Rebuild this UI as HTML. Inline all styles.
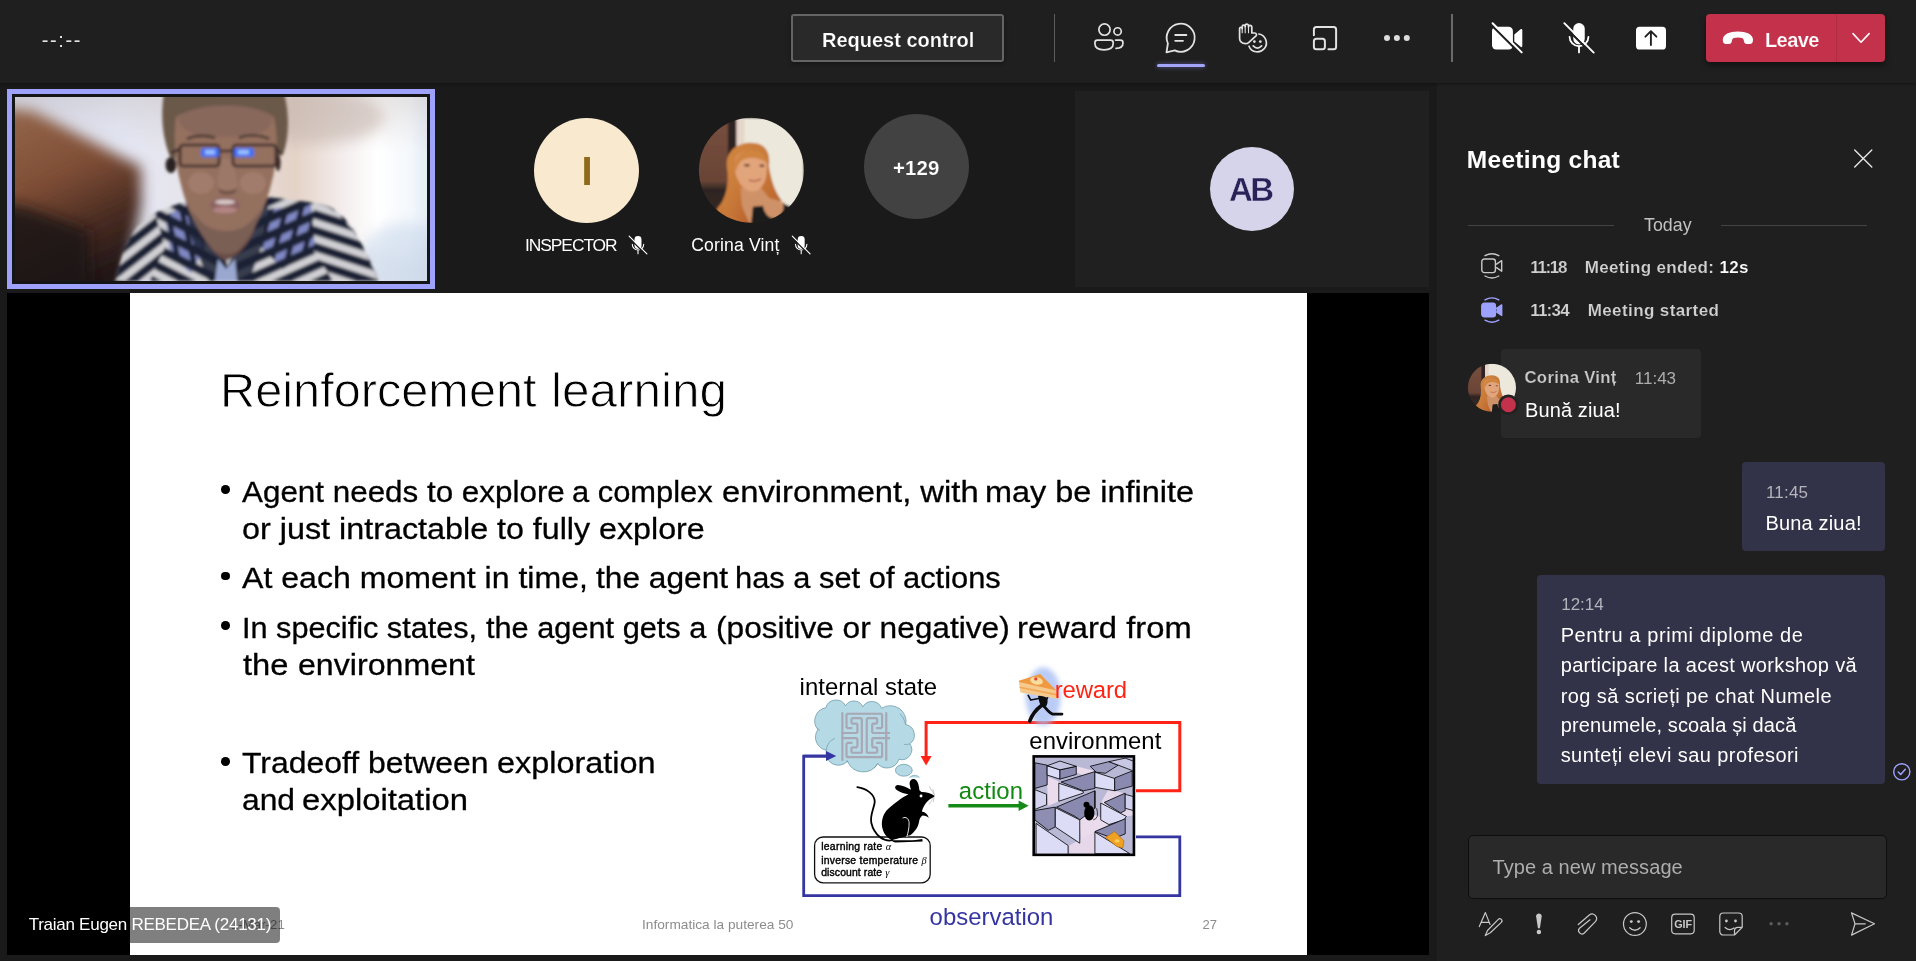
<!DOCTYPE html>
<html lang="en"><head><meta charset="utf-8"><title>Meeting</title>
<style>
*{box-sizing:border-box;margin:0;padding:0}
html,body{width:1916px;height:961px;overflow:hidden;background:#1a1a1a;font-family:"Liberation Sans",sans-serif}
body{position:relative;will-change:transform}
.a{position:absolute}
.t{position:absolute;white-space:nowrap;line-height:1;transform-origin:0 50%}
svg{position:absolute;overflow:visible}
#top{left:0;top:0;width:1916px;height:83px;background:#1f1f1f;box-shadow:0 1px 3px rgba(0,0,0,.32)}
#stage{left:0;top:83px;width:1437px;height:878px;background:#1a1a1a}
#chat{left:1437px;top:83px;width:479px;height:878px;background:#1f1f1f}
.sep{background:#5c5c5c}
.gk{font-family:"Liberation Serif",serif;font-style:italic;-webkit-text-stroke:0}
</style></head><body>

<div id="stage" class="a"></div>
<div class="a" style="left:7px;top:89px;width:428px;height:200px;border:5px solid #9fa2fb;background:#151515"></div>
<svg class="a" style="left:15px;top:97px;overflow:hidden" width="412" height="184" viewBox="0 0 412 184">
<defs>
<linearGradient id="vbg" x1="0" x2="1" y1="0" y2="0">
<stop offset="0" stop-color="#d8dcec"/><stop offset=".25" stop-color="#e4e8f6"/><stop offset=".5" stop-color="#e8e2e6"/><stop offset=".68" stop-color="#e4d2c6"/><stop offset=".8" stop-color="#f4eeee"/><stop offset=".88" stop-color="#ffffff"/><stop offset=".96" stop-color="#f4f8fc"/><stop offset="1" stop-color="#e4ecf6"/>
</linearGradient>
<linearGradient id="vbg2" x1="0" x2="0" y1="0" y2="1"><stop offset="0" stop-color="#b8aca8" stop-opacity=".3"/><stop offset=".3" stop-color="#c8bcb8" stop-opacity="0"/><stop offset=".8" stop-color="#a0a4b0" stop-opacity="0"/><stop offset="1" stop-color="#b4bccc" stop-opacity=".3"/></linearGradient>
<linearGradient id="brn" x1="0" x2=".35" y1="0" y2="1"><stop offset="0" stop-color="#96694e"/><stop offset=".45" stop-color="#7f4e36"/><stop offset=".75" stop-color="#4a2c22"/><stop offset="1" stop-color="#241818"/></linearGradient>
<filter id="b8" x="-20%" y="-20%" width="140%" height="140%"><feGaussianBlur stdDeviation="7"/></filter>
<filter id="b3" x="-20%" y="-20%" width="140%" height="140%"><feGaussianBlur stdDeviation="2.6"/></filter>
<filter id="b1" x="-10%" y="-10%" width="120%" height="120%"><feGaussianBlur stdDeviation="1.35"/></filter>
<pattern id="strL" width="20" height="15.500" patternUnits="userSpaceOnUse" patternTransform="rotate(27 160 150)"><rect width="20" height="15.500" fill="#d0d0d4"/><rect width="20" height="8.400" fill="#1d2236"/></pattern>
<pattern id="strR" width="20" height="15.500" patternUnits="userSpaceOnUse" patternTransform="rotate(-24 280 140)"><rect width="20" height="15.500" fill="#d0d0d4"/><rect width="20" height="8.400" fill="#1d2236"/></pattern>
<pattern id="slvL" width="20" height="15.500" patternUnits="userSpaceOnUse" patternTransform="rotate(-38 120 150)"><rect width="20" height="15.500" fill="#d0d0d4"/><rect width="20" height="8.400" fill="#1d2236"/></pattern>
<pattern id="slvR" width="20" height="15.500" patternUnits="userSpaceOnUse" patternTransform="rotate(18 330 150)"><rect width="20" height="15.500" fill="#d0d0d4"/><rect width="20" height="8.400" fill="#1d2236"/></pattern>
<pattern id="chk" width="19" height="15.500" patternUnits="userSpaceOnUse" patternTransform="rotate(27 160 150) skewX(40)"><rect width="19" height="15.500" fill="#1d2236"/><rect y="8.400" width="12" height="7.100" fill="#8088c4"/></pattern>
<pattern id="chk2" width="19" height="15.500" patternUnits="userSpaceOnUse" patternTransform="rotate(-24 280 140) skewX(-40)"><rect width="19" height="15.500" fill="#1d2236"/><rect y="8.400" width="12" height="7.100" fill="#8088c4"/></pattern>
<clipPath id="shL"><path d="M100,184C108,150 118,128 140,116C158,108 172,104 186,100L212,150L212,184z"/></clipPath>
<clipPath id="shR"><path d="M212,184L212,150L252,100C270,102 290,104 310,108C332,116 345,140 364,184z"/></clipPath>
</defs>
<rect width="412" height="184" fill="url(#vbg)"/>
<rect width="412" height="184" fill="url(#vbg2)"/>
<ellipse cx="392" cy="160" rx="46" ry="34" fill="#c4d4ea" opacity=".55" filter="url(#b8)"/>
<ellipse cx="300" cy="20" rx="70" ry="26" fill="#c8b8b0" opacity=".6" filter="url(#b8)"/>
<!-- brown blurry object -->
<path d="M-20,10L18,14L126,70L126,108L108,200L-20,200z" fill="url(#brn)" filter="url(#b8)"/>
<path d="M-20,106L10,110L74,134L76,200L-20,200z" fill="#1d1416" opacity=".88" filter="url(#b8)"/>
<g filter="url(#b1)">
<!-- shirt -->
<g clip-path="url(#shL)"><rect x="90" y="90" width="130" height="100" fill="url(#strL)"/><path d="M100,184C106,150 118,128 140,116L150,150L132,190z" fill="url(#slvL)"/><path d="M150,118L176,108L190,150L176,176L156,160z" fill="url(#chk)"/><path d="M170,100L196,130L212,170L212,190L196,190L176,140z" fill="#1d2236" opacity=".85"/></g>
<g clip-path="url(#shR)"><rect x="205" y="90" width="170" height="100" fill="url(#strR)"/><path d="M300,104C332,116 346,142 366,190L322,190L296,150z" fill="url(#slvR)"/><path d="M252,112L296,108L300,150L268,172L246,150z" fill="url(#chk2)"/><path d="M254,100L232,130L212,170L212,190L232,190L250,140z" fill="#1d2236" opacity=".85"/></g>
<path d="M203,162L211,172L220,162L222,184L200,184z" fill="#9aa8d0"/>
<!-- neck -->
<path d="M186,120C186,140 196,156 211,164C228,156 240,140 242,120z" fill="#6a4e46"/>
<!-- hair -->
<path d="M149,-4C145,20 148,44 156,62L168,60L172,26C190,8 236,8 254,26L260,60L268,58C275,38 274,14 269,-4z" fill="#6a584a"/>
<!-- face -->
<path d="M161,20C158,44 160,66 166,88C172,112 182,134 198,152C206,158 216,158 224,152C238,136 250,112 256,88C262,66 264,44 259,20C240,6 182,6 161,20z" fill="#94705f"/>
<path d="M163,20C184,4 238,4 258,20C256,34 246,40 210,40C176,40 166,34 163,20z" fill="#86665a" opacity=".8"/>
<ellipse cx="186" cy="86" rx="13" ry="11" fill="#a58070" opacity=".75"/><ellipse cx="238" cy="86" rx="13" ry="11" fill="#a58070" opacity=".75"/>
<path d="M206,62C204,78 200,88 204,92C210,95 216,95 222,92C224,86 220,76 218,62z" fill="#9c7868"/>
<path d="M203,91C208,95 216,95 222,91L220,96C214,98 210,98 205,96z" fill="#6e5148"/>
<path d="M176,112C184,140 198,156 211,157C226,155 238,140 246,112C236,128 226,134 211,134C196,134 186,128 176,112z" fill="#7a5e54"/>
<path d="M172,42C180,38 192,38 200,41M224,41C232,37 246,38 254,42" stroke="#4a3830" stroke-width="2.600" fill="none"/>
<!-- ear / headset -->
<ellipse cx="156" cy="68" rx="5.500" ry="8" fill="#2c2220"/>
<ellipse cx="263" cy="66" rx="2.600" ry="8" fill="#3a2c28"/>
<!-- mouth -->
<ellipse cx="210" cy="108" rx="15" ry="7.500" fill="#8c6262"/>
<ellipse cx="210" cy="105" rx="10" ry="2.600" fill="#d6c8c6"/>
<ellipse cx="210" cy="113" rx="12" ry="3.200" fill="#b48484"/>
<!-- glasses -->
<g fill="none" stroke="#3b2a28" stroke-width="2.600"><rect x="165" y="48" width="39" height="21" rx="3"/><rect x="218" y="48" width="43" height="21" rx="3"/><path d="M204,54H218M165,52L156,56M261,52L266,56"/></g>
<rect x="186" y="51" width="18" height="9" rx="2" fill="#3f6ff2"/><rect x="219" y="51" width="20" height="9" rx="2" fill="#3f6ff2"/>
<rect x="190" y="53" width="10" height="4.500" rx="1" fill="#9cc0ff"/><rect x="223" y="53" width="11" height="4.500" rx="1" fill="#9cc0ff"/>
</g>
</svg>

<div class="a" style="left:1075px;top:91px;width:354px;height:196px;background:#202020"></div>
<div class="a" style="left:7px;top:293px;width:1422px;height:662px;background:#000"></div>
<div class="a" id="slide" style="left:130px;top:293px;width:1177px;height:662px;background:#fff"></div>


<div class="a" style="left:534px;top:118px;width:105px;height:105px;border-radius:50%;background:#f8e9cf"></div>
<span id="t36" class="t " style="left:581.50px;top:150.94px;font-size:40px;font-weight:700;color:#8e6a1a;">I</span>
<div class="a" style="left:864px;top:114.300px;width:105px;height:105px;border-radius:50%;background:#424242"></div>
<span id="t37" class="t " style="left:893.00px;top:157.93px;font-size:20.4px;font-weight:700;color:#fff;letter-spacing:0.133px;-webkit-text-stroke:.2px #424242;">+129</span>
<div class="a" style="left:1210px;top:146.700px;width:84px;height:84px;border-radius:50%;background:#d6d4ea"></div>
<span id="t38" class="t " style="left:1229.00px;top:172.87px;font-size:33px;font-weight:700;color:#2b2159;letter-spacing:-2.600px;-webkit-text-stroke:.45px #d6d4ea;">AB</span>
<span id="t39" class="t " style="left:525.00px;top:236.97px;font-size:17.4px;font-weight:400;color:#fff;letter-spacing:-1.062px;">INSPECTOR</span>
<span id="t40" class="t " style="left:691.20px;top:236.80px;font-size:17.6px;font-weight:400;color:#fff;letter-spacing:0.140px;">Corina Vinț</span>
<svg class="a" style="left:0;top:0" width="1916" height="961" viewBox="0 0 1916 961">
<defs>
<filter id="ab1" x="-10%" y="-10%" width="120%" height="120%"><feGaussianBlur stdDeviation=".9"/></filter>
<clipPath id="acl"><circle cx="52.500" cy="52.500" r="52.500"/></clipPath>
<linearGradient id="awall" x1="0" x2="0" y1="0" y2="1"><stop offset="0" stop-color="#77503f"/><stop offset=".6" stop-color="#6a4436"/><stop offset=".68" stop-color="#2e2422"/><stop offset="1" stop-color="#3a2c28"/></linearGradient>
<linearGradient id="ahair" x1="0" x2="1" y1="0" y2="1"><stop offset="0" stop-color="#d28a42"/><stop offset=".5" stop-color="#c87838"/><stop offset="1" stop-color="#b8602c"/></linearGradient>
<g id="corina" clip-path="url(#acl)">
<g filter="url(#ab1)">
<rect width="105" height="105" fill="#ece8dc"/>
<rect x="-2" y="-2" width="32" height="109" fill="url(#awall)"/>
<rect x="29" y="-2" width="9" height="60" fill="#2e2420"/>
<rect x="37.500" y="-2" width="8" height="60" fill="#e6d6ca"/>
<!-- hair back -->
<path d="M28,50C26,34 38,25 52,25C66,25 72,34 70,48C72,62 76,74 83,83C76,86 68,84 64,78L60,108L18,108C14,100 16,92 22,86C28,76 30,64 28,50z" fill="url(#ahair)"/>
<!-- neck / chest -->
<path d="M42,70L62,70L70,80L86,85L84,108L44,108z" fill="#cf9268"/>
<!-- face -->
<path d="M36,46C36,36 44,32 54,33C64,34 69,40 68,50C68,60 66,68 58,73C50,76 42,70 38,60C36,56 36,50 36,46z" fill="#e2a47a"/>
<path d="M36,46C38,36 46,31 56,33C64,34 69,40 69,46C62,40 52,38 44,42C40,44 38,50 37,54z" fill="#cf8440"/>
<ellipse cx="48" cy="47.500" rx="3" ry="1.300" fill="#6a4030"/><ellipse cx="63" cy="48" rx="2.600" ry="1.200" fill="#6a4030"/>
<path d="M50,62Q57,65 62,61" stroke="#a85848" stroke-width="1.300" fill="none"/>
<!-- hair front strands -->
<path d="M30,48C30,60 30,76 22,88C30,92 38,100 44,108L52,108C46,96 40,84 38,62C36,56 34,50 34,44z" fill="url(#ahair)"/>
<!-- clothes -->
<path d="M54,89L64,88C66,98 72,102 78,100C84,96 86,90 84,86L96,90L100,108L52,108z" fill="#1e1a1a"/>
</g></g>
</defs>
<use href="#corina" transform="translate(698.900,117.800)"/>
</svg>



<span id="t3" class="t " style="left:219.53px;top:365.92px;font-size:49px;font-weight:400;color:#000;transform:scaleX(0.9936);-webkit-text-stroke:0.9px #fff;">Reinforcement</span>
<span id="t4" class="t " style="left:550.76px;top:365.92px;font-size:49px;font-weight:400;color:#000;transform:scaleX(1.0102);-webkit-text-stroke:0.9px #fff;">learning</span>
<div class="a" style="left:221.4px;top:485.4px;width:8.6px;height:8.6px;border-radius:50%;background:#000"></div><div class="a" style="left:221.4px;top:571.7px;width:8.6px;height:8.6px;border-radius:50%;background:#000"></div><div class="a" style="left:221.4px;top:621.1px;width:8.6px;height:8.6px;border-radius:50%;background:#000"></div><div class="a" style="left:221.4px;top:757.0px;width:8.6px;height:8.6px;border-radius:50%;background:#000"></div>
<span id="t5" class="t " style="left:242.30px;top:476.50px;font-size:29.3px;font-weight:400;color:#000;transform:scaleX(1.0713);-webkit-text-stroke:.3px #000;">Agent needs to explore</span>
<span id="t6" class="t " style="left:571.95px;top:476.50px;font-size:29.3px;font-weight:400;color:#000;transform:scaleX(1.0538);-webkit-text-stroke:.3px #000;">a complex</span>
<span id="t7" class="t " style="left:721.88px;top:476.50px;font-size:29.3px;font-weight:400;color:#000;transform:scaleX(1.1176);-webkit-text-stroke:.3px #000;">environment, with</span>
<span id="t8" class="t " style="left:984.59px;top:476.50px;font-size:29.3px;font-weight:400;color:#000;transform:scaleX(1.1065);-webkit-text-stroke:.3px #000;">may be infinite</span>
<span id="t9" class="t " style="left:241.70px;top:513.80px;font-size:29.3px;font-weight:400;color:#000;transform:scaleX(1.1036);-webkit-text-stroke:.3px #000;">or just intractable</span>
<span id="t10" class="t " style="left:496.80px;top:513.80px;font-size:29.3px;font-weight:400;color:#000;transform:scaleX(1.0995);-webkit-text-stroke:.3px #000;">to fully explore</span>
<span id="t11" class="t " style="left:242.30px;top:562.90px;font-size:29.3px;font-weight:400;color:#000;transform:scaleX(1.0952);-webkit-text-stroke:.3px #000;">At each moment in time,</span>
<span id="t12" class="t " style="left:595.60px;top:562.90px;font-size:29.3px;font-weight:400;color:#000;transform:scaleX(1.0811);-webkit-text-stroke:.3px #000;">the agent</span>
<span id="t13" class="t " style="left:734.79px;top:562.90px;font-size:29.3px;font-weight:400;color:#000;transform:scaleX(1.0528);-webkit-text-stroke:.3px #000;">has a set of actions</span>
<span id="t14" class="t " style="left:242.01px;top:612.50px;font-size:29.3px;font-weight:400;color:#000;transform:scaleX(1.0464);-webkit-text-stroke:.3px #000;">In specific states,</span>
<span id="t15" class="t " style="left:485.50px;top:612.50px;font-size:29.3px;font-weight:400;color:#000;transform:scaleX(1.0486);-webkit-text-stroke:.3px #000;">the agent gets a</span>
<span id="t16" class="t " style="left:715.92px;top:612.50px;font-size:29.3px;font-weight:400;color:#000;transform:scaleX(1.0800);-webkit-text-stroke:.3px #000;">(positive or negative)</span>
<span id="t17" class="t " style="left:1016.56px;top:612.50px;font-size:29.3px;font-weight:400;color:#000;transform:scaleX(1.1176);-webkit-text-stroke:.3px #000;">reward from</span>
<span id="t18" class="t " style="left:242.80px;top:650.10px;font-size:29.3px;font-weight:400;color:#000;transform:scaleX(1.1175);-webkit-text-stroke:.3px #000;">the</span>
<span id="t19" class="t " style="left:297.70px;top:650.10px;font-size:29.3px;font-weight:400;color:#000;transform:scaleX(1.0969);-webkit-text-stroke:.3px #000;">environment</span>
<span id="t20" class="t " style="left:241.70px;top:748.40px;font-size:29.3px;font-weight:400;color:#000;transform:scaleX(1.0889);-webkit-text-stroke:.3px #000;">Tradeoff between</span>
<span id="t21" class="t " style="left:496.79px;top:748.40px;font-size:29.3px;font-weight:400;color:#000;transform:scaleX(1.1064);-webkit-text-stroke:.3px #000;">exploration</span>
<span id="t22" class="t " style="left:242.12px;top:785.40px;font-size:29.3px;font-weight:400;color:#000;transform:scaleX(1.0848);-webkit-text-stroke:.3px #000;">and</span>
<span id="t23" class="t " style="left:302.48px;top:785.40px;font-size:29.3px;font-weight:400;color:#000;transform:scaleX(1.1199);-webkit-text-stroke:.3px #000;">exploitation</span>
<svg class="a" style="left:0;top:0" width="1916" height="961" viewBox="0 0 1916 961" fill="none">
<defs>
<filter id="db" x="-30%" y="-30%" width="160%" height="160%"><feGaussianBlur stdDeviation="2.500"/></filter>
<filter id="dbw" x="-30%" y="-30%" width="160%" height="160%"><feGaussianBlur stdDeviation="28"/></filter>
<filter id="ds" x="-5%" y="-5%" width="110%" height="110%"><feGaussianBlur stdDeviation=".45"/></filter>
<clipPath id="mzc"><rect x="65" y="45" width="880" height="865"/></clipPath>
</defs>
<g filter="url(#ds)">
<!-- blue observation loop -->
<path d="M1136,836.900H1179.800V895.600H803.700V756.100H827" stroke="#3434a2" stroke-width="2.800"/>
<!-- thought cloud -->
<g transform="translate(805,690) scale(.09884)">
<path d="M210,180A108,108 0 0 1 410,160A98,98 0 0 1 585,170A105,105 0 0 1 775,185A160,160 0 0 1 1020,350A108,108 0 0 1 1060,545A100,100 0 0 1 950,700A125,125 0 0 1 735,745A170,170 0 0 1 430,720A125,125 0 0 1 215,610A135,135 0 0 1 130,400A135,135 0 0 1 210,180z" fill="#b5d9e5" stroke="#4f8496" stroke-width="6"/>
<path d="M215,610Q225,520 300,490M130,400Q120,380 150,410M1020,350Q1000,270 960,240M1060,545Q1030,555 1000,550M735,745Q725,765 700,790M430,720Q420,700 425,735" stroke="#4f8496" stroke-width="5"/>
<ellipse cx="1000" cy="812" rx="85" ry="60" fill="#b5d9e5" stroke="#4f8496" stroke-width="6"/>
<path d="M1055,885Q1110,840 1160,885" stroke="#4f8496" stroke-width="5" fill="#b5d9e5"/>
<path d="M378,225V715M822,225V715M420,240H780M420,680H780M420,240V385M780,240V385M420,535V680M780,535V680M365,435H530M365,487H530M680,435H860M680,487H860M575,285V640M625,285V640M470,285H575M625,285H730M470,635H575M625,635H730M470,285V340M730,285V340M470,580V635M730,580V635M420,385H480M720,385H780M420,535H480M720,535H780M530,340V435M530,487V580M680,340V435M680,487V580M470,340H530M680,340H730M470,580H530M680,580H730" stroke="#a7a8b4" stroke-width="22"/>
</g>
<path d="M803.700,756.100H828" stroke="#3434a2" stroke-width="2.800"/><path d="M826,751.100L836.200,756.100L826,761.100z" fill="#3434a2"/>
<!-- red reward loop -->
<path d="M1136,790.700H1179.800V722.600H926.100V757" stroke="#ff2312" stroke-width="3"/>
<path d="M920.600,756.100H931.600L926.100,765.500z" fill="#ff2312"/>
<!-- green action arrow -->
<path d="M948.400,805.800H1020" stroke="#128a12" stroke-width="3.500"/>
<path d="M1018.600,800.500L1028.600,805.800L1018.600,811.100z" fill="#128a12"/>
<!-- params box -->
<rect x="814.600" y="837" width="115.600" height="45.800" rx="8.500" fill="#fff" stroke="#111" stroke-width="1.300"/>
<!-- mouse -->
<g transform="translate(850,770) scale(.0812)">
<path d="M520,865C420,885 300,810 262,650C245,540 300,470 305,390C305,300 200,225 90,210" stroke="#000" stroke-width="22" stroke-linecap="round"/>
<path d="M1045,320C1000,285 930,268 880,270L855,250C850,180 830,120 790,110C750,105 730,140 735,180C738,205 745,225 750,243C700,215 640,185 590,185C550,190 545,225 580,250C620,275 680,295 720,300C640,340 520,430 450,500C400,560 380,650 400,720C415,790 470,850 530,865L700,865C760,868 830,860 890,850L895,880L560,892C540,890 520,880 510,865L740,805C800,760 840,700 850,640C855,600 870,575 895,560C930,560 955,575 970,590C960,550 930,520 885,512C895,460 930,400 975,365C1000,350 1030,335 1045,320z" fill="#000"/>
<path d="M648,592C690,570 725,600 728,650C730,710 715,770 700,825" stroke="#fff" stroke-width="11"/>
<circle cx="875" cy="320" r="18" fill="#fff"/>
<path d="M1035,300L975,200M1040,305L1020,235M1030,335L975,425M1035,340L1025,400" stroke="#666" stroke-width="4"/>
</g>
<!-- waiter with cheese -->
<g transform="translate(1010,660) scale(.10403)">
<ellipse cx="320" cy="350" rx="170" ry="280" fill="#a9c0f4" opacity=".8" filter="url(#dbw)"/>
<path d="M270,345C290,330 350,350 360,380C365,420 350,450 330,460C300,455 280,420 270,345z" fill="#0a0a10"/>
<path d="M300,440C260,470 215,520 190,585" stroke="#0a0a10" stroke-width="34" stroke-linecap="round"/>
<path d="M330,450C360,480 380,510 410,520L500,520" stroke="#0a0a10" stroke-width="26" stroke-linecap="round" stroke-linejoin="round"/>
<path d="M275,370L200,385L175,340M350,380L370,340" stroke="#0a0a10" stroke-width="16" stroke-linecap="round" stroke-linejoin="round"/>
<path d="M85,200L290,135L445,292L95,240z" fill="#ef9a40"/>
<path d="M88,212L445,292L470,375L100,312z" fill="#f6c98c"/>
<path d="M92,262L455,335" stroke="#f0a858" stroke-width="16"/>
<ellipse cx="255" cy="200" rx="62" ry="36" fill="#f8dca0" transform="rotate(12 255 200)"/>
<circle cx="248" cy="182" r="16" fill="#e8402a"/>
</g>
<!-- environment maze -->
<g transform="translate(1025,750) scale(.11651)">
<rect x="65" y="45" width="880" height="865" fill="#b9b9d6"/>
<g clip-path="url(#mzc)" stroke="#000" stroke-width="7" stroke-linejoin="round">
<path d="M200,230L290,270L290,440L200,480L190,300z" fill="#eadcec" stroke="none"/>
<path d="M430,570L620,560L720,640L600,700L480,800L470,620z" fill="#eadcec" stroke="none"/>
<path d="M380,820L600,700L600,890L380,890z" fill="#e6d8ea" stroke="none"/>
<path d="M440,140L600,180L520,230L440,190z" fill="#eadcec" stroke="none"/>
<path d="M720,330L930,400L930,560L870,570L650,455z" fill="#e4d8ea" stroke="none"/>
<path d="M85,110L190,130L190,300L85,330z" fill="#8a8ab0"/>
<path d="M190,135L300,170L300,250L190,215z" fill="#dcdcf6"/>
<path d="M300,170L440,140L440,210L300,250z" fill="#8a8ab0"/>
<path d="M190,135L300,95L440,140L300,170z" fill="#c4c4e0"/>
<path d="M310,275L600,185L600,330L500,350z" fill="#8a8ab0"/>
<path d="M290,285L500,355L500,370L290,440z" fill="#dcdcf6"/>
<path d="M560,140L720,100L800,130L690,200L610,190z" fill="#9a9abc"/>
<path d="M600,190L770,245L770,350L600,320z" fill="#dcdcf6"/>
<path d="M770,240L920,180L920,310L770,350z" fill="#8a8ab0"/>
<path d="M720,100L860,70L930,95L930,180L800,130z" fill="#c8c8e4"/>
<path d="M85,340L185,380L185,470L85,510z" fill="#d4d4f0"/>
<path d="M270,490L600,350L600,500L470,600L430,570z" fill="#8a8ab0"/>
<path d="M85,520L260,490L260,660L200,690L85,600z" fill="#8e8eb2"/>
<path d="M260,495L470,600L470,800L260,660z" fill="#dcdcf6"/>
<path d="M680,450L860,370L860,520L820,540z" fill="#8a8ab0"/>
<path d="M650,455L870,570L850,600L720,640L650,600z" fill="#dcdcf6"/>
<path d="M860,380L930,400L930,520L860,500z" fill="#d0d0ec"/>
<path d="M600,700L860,590L860,720L760,760z" fill="#8a8ab0"/>
<path d="M95,630L370,820L370,900L95,900z" fill="#dcdcf6"/>
<path d="M600,705L900,890L600,890z" fill="#dcdcf6"/>
<path d="M600,350V500" stroke-width="9"/>
<ellipse cx="552" cy="540" rx="44" ry="66" fill="#000" stroke="none"/><circle cx="528" cy="470" r="26" fill="#000" stroke="none"/>
<path d="M585,600Q640,590 615,500" fill="none" stroke-width="6"/>
<path d="M690,750L770,700L850,780L840,840L790,830z" fill="#f0a020" stroke="#a86808" stroke-width="5"/>
<ellipse cx="790" cy="780" rx="22" ry="14" fill="#f8d060" stroke="none"/>
</g>
<rect x="75" y="55" width="860" height="845" stroke="#000" stroke-width="22"/>
</g>
</g>
</svg>

<span id="t24" class="t " style="left:799.60px;top:674.97px;font-size:23.9px;font-weight:400;color:#000;letter-spacing:0.054px;">internal state</span>
<span id="t25" class="t " style="left:1054.80px;top:678.47px;font-size:23.9px;font-weight:400;color:#ff2312;letter-spacing:-0.160px;">reward</span>
<span id="t26" class="t " style="left:1029.30px;top:728.67px;font-size:23.9px;font-weight:400;color:#000;letter-spacing:0.050px;">environment</span>
<span id="t27" class="t " style="left:958.80px;top:778.97px;font-size:23.9px;font-weight:400;color:#128a12;letter-spacing:0.080px;">action</span>
<span id="t28" class="t " style="left:929.60px;top:905.37px;font-size:23.9px;font-weight:400;color:#3434a2;letter-spacing:0.030px;">observation</span>
<span id="t29" class="t " style="left:821.20px;top:842.20px;font-size:10.4px;font-weight:400;color:#000;letter-spacing:0.279px;-webkit-text-stroke:.4px #000;">learning rate <span class="gk">α</span></span>
<span id="t30" class="t " style="left:821.20px;top:855.50px;font-size:10.4px;font-weight:400;color:#000;letter-spacing:0.245px;-webkit-text-stroke:.4px #000;">inverse temperature <span class="gk">β</span></span>
<span id="t31" class="t " style="left:821.20px;top:867.90px;font-size:10.4px;font-weight:400;color:#000;letter-spacing:0.121px;-webkit-text-stroke:.4px #000;">discount rate <span class="gk">γ</span></span>
<span id="t32" class="t " style="left:230.98px;top:917.50px;font-size:13px;font-weight:400;color:#8c8c8c;transform:scaleX(1.0196);">1-Mar-21</span>
<span id="t33" class="t " style="left:642.45px;top:917.50px;font-size:13px;font-weight:400;color:#8c8c8c;transform:scaleX(1.0528);">Informatica la puterea 50</span>
<span id="t34" class="t " style="left:1202.50px;top:917.50px;font-size:13px;font-weight:400;color:#8c8c8c;transform:scaleX(1.0000);">27</span>
<div class="a" style="left:12px;top:907px;width:268px;height:35.5px;border-radius:4px;background:rgba(0,0,0,.5)"></div>
<span id="t35" class="t " style="left:28.70px;top:916.01px;font-size:17px;font-weight:400;color:#fff;letter-spacing:-0.263px;">Traian Eugen REBEDEA (24131)</span>


<div id="chat" class="a"></div>
<span id="t41" class="t " style="left:1466.80px;top:148.36px;font-size:24.5px;font-weight:700;color:#fff;letter-spacing:0.291px;">Meeting chat</span>
<span id="t42" class="t " style="left:1644.10px;top:216.63px;font-size:17.8px;font-weight:400;color:#c2c2c2;">Today</span>
<div class="a" style="left:1468px;top:225px;width:146px;height:1px;background:#444"></div>
<div class="a" style="left:1721px;top:225px;width:146px;height:1px;background:#444"></div>
<span id="t43" class="t " style="left:1530.20px;top:258.51px;font-size:17px;font-weight:700;color:#d0d0d0;letter-spacing:-1.325px;-webkit-text-stroke:.15px #1f1f1f;">11:18</span>
<span id="t44" class="t " style="left:1584.70px;top:258.51px;font-size:17px;font-weight:700;color:#d0d0d0;letter-spacing:0.359px;-webkit-text-stroke:.15px #1f1f1f;">Meeting ended: <span style="color:#fff">12s</span></span>
<span id="t45" class="t " style="left:1530.20px;top:302.31px;font-size:17px;font-weight:700;color:#d0d0d0;letter-spacing:-0.775px;-webkit-text-stroke:.15px #1f1f1f;">11:34</span>
<span id="t46" class="t " style="left:1587.70px;top:302.31px;font-size:17px;font-weight:700;color:#d0d0d0;letter-spacing:0.400px;-webkit-text-stroke:.15px #1f1f1f;">Meeting started</span>
<div class="a" style="left:1501px;top:349px;width:200px;height:89px;border-radius:4px;background:#292929"></div>
<span id="t47" class="t " style="left:1524.50px;top:370.36px;font-size:16.7px;font-weight:700;color:#c8c8c8;letter-spacing:0.320px;-webkit-text-stroke:.15px #292929;">Corina Vinț</span>
<span id="t48" class="t " style="left:1634.70px;top:370.11px;font-size:17px;font-weight:400;color:#adadad;letter-spacing:0.025px;">11:43</span>
<span id="t49" class="t " style="left:1525.10px;top:399.97px;font-size:20px;font-weight:400;color:#fff;letter-spacing:0.100px;">Bună ziua!</span>
<div class="a" style="left:1742px;top:462px;width:143px;height:89px;border-radius:4px;background:#323248"></div>
<span id="t50" class="t " style="left:1766.00px;top:483.61px;font-size:17px;font-weight:400;color:#b4b4bc;letter-spacing:0.175px;">11:45</span>
<span id="t51" class="t " style="left:1765.40px;top:513.07px;font-size:20px;font-weight:400;color:#fff;letter-spacing:0.178px;">Buna ziua!</span>
<div class="a" style="left:1537px;top:575px;width:348px;height:209px;border-radius:4px;background:#323248"></div>
<span id="t52" class="t " style="left:1561.30px;top:596.01px;font-size:17px;font-weight:400;color:#b4b4bc;letter-spacing:-0.050px;">12:14</span>
<span id="t53" class="t " style="left:1560.70px;top:625.37px;font-size:20px;font-weight:400;color:#fff;letter-spacing:0.596px;">Pentru a primi diplome de</span>
<span id="t54" class="t " style="left:1560.70px;top:655.27px;font-size:20px;font-weight:400;color:#fff;letter-spacing:0.332px;">participare la acest workshop vă</span>
<span id="t55" class="t " style="left:1560.70px;top:685.57px;font-size:20px;font-weight:400;color:#fff;letter-spacing:0.425px;">rog să scrieți pe chat Numele</span>
<span id="t56" class="t " style="left:1560.70px;top:715.27px;font-size:20px;font-weight:400;color:#fff;letter-spacing:0.137px;">prenumele, scoala și dacă</span>
<span id="t57" class="t " style="left:1560.70px;top:745.47px;font-size:20px;font-weight:400;color:#fff;letter-spacing:0.423px;">sunteți elevi sau profesori</span>
<div class="a" style="left:1467.5px;top:834.5px;width:419px;height:64px;border-radius:5px;background:#292929;border:1.5px solid #0e0e0e"></div>
<span id="t58" class="t " style="left:1492.50px;top:857.37px;font-size:20px;font-weight:400;color:#adadad;letter-spacing:0.071px;">Type a new message</span>
<span id="t59" class="t " style="left:1674.20px;top:918.66px;font-size:10.8px;font-weight:700;color:#c8c8c8;">GIF</span>
<svg class="a" style="left:0;top:0" width="1916" height="961" viewBox="0 0 1916 961" fill="none" stroke-linecap="round" stroke-linejoin="round">
<!-- participant mics -->
<g style="--bg:#1a1a1a"><use href="#mic" transform="translate(638,236) scale(.605)"/><use href="#mic" transform="translate(801.200,236) scale(.605)"/></g>
<!-- chat avatar -->
<use href="#corina" transform="translate(1467.900,363.700) scale(.4581)"/>
<circle cx="1508.400" cy="404.700" r="10.300" fill="#222"/><circle cx="1508.400" cy="404.700" r="7.500" fill="#c4314b"/>
<!-- chat close -->
<path d="M1854.700,150L1871.800,167M1871.800,150L1854.700,167" stroke="#e6e6e6" stroke-width="1.400"/>
<!-- meeting icons -->
<g stroke="#c8c8c8" stroke-width="1.400"><use href="#cam" transform="translate(1481.100,258.300)"/></g>
<g stroke="#9ea2ff" stroke-width="1.400" fill="#9ea2ff"><use href="#cam" transform="translate(1481.100,302.500)"/></g>
<!-- read receipt -->
<circle cx="1901.800" cy="771.800" r="8.100" stroke="#9ea2ff" stroke-width="1.400"/>
<path d="M1898.200,772L1900.700,774.500L1905.300,769.200" stroke="#9ea2ff" stroke-width="1.500"/>
<!-- compose toolbar -->
<g stroke="#c8c8c8" stroke-width="1.200">
<path d="M1479.300,926.600L1485.400,912.600L1490,924.400M1481.300,922.400H1488.800"/>
<path d="M1498.300,919.400a2.100,2.100 0 0 1 3,3L1490.300,932.700L1485.300,935.600L1487.500,930.500z"/>
<path d="M1578.300,924.500L1589.300,915a4.500,4.500 0 0 1 6.300,6.300L1584.300,933a3.400,3.400 0 0 1 -4.800,-4.800L1590,919.800"/>
<circle cx="1634.900" cy="924" r="11.400"/>
<path d="M1629.700,927.700Q1634.900,932.800 1640.100,927.700"/>
<rect x="1671.700" y="914.200" width="22.500" height="19.600" rx="3.500"/>
<path d="M1742.200,927.300V916.500a3.500,3.500 0 0 0 -3.500,-3.500H1723.300a3.500,3.500 0 0 0 -3.500,3.500V931.500a3.500,3.500 0 0 0 3.500,3.500H1734.500L1742.200,927.300H1738a3.500,3.500 0 0 0 -3.500,3.500V935"/>
<path d="M1725.100,927.500Q1729.500,931.400 1734,928"/>
<path d="M1851.500,912.900L1874.500,923.800L1851.500,935.100L1855,923.800zM1855,923.800H1865.300"/>
</g>
<g fill="#c8c8c8"><circle cx="1631.300" cy="921.600" r="1.450"/><circle cx="1638.600" cy="921.600" r="1.450"/><circle cx="1726.400" cy="921" r="1.400"/><circle cx="1735.500" cy="921" r="1.400"/>
<path d="M1536.100,916.300c0,-3.600 5.600,-3.600 5.600,0l-1.700,11.300c-.2,1.300 -2,1.300 -2.200,0z"/><circle cx="1538.900" cy="932" r="2.250"/></g>
<g fill="#5c5c5c"><circle cx="1771.100" cy="923.800" r="1.700"/><circle cx="1779" cy="923.800" r="1.700"/><circle cx="1786.900" cy="923.800" r="1.700"/></g>
</svg>



<div id="top" class="a"></div>
<span id="t0" class="t " style="left:41.70px;top:30.27px;font-size:20px;font-weight:400;color:#e6e6e6;letter-spacing:1.625px;">--:--</span>
<div class="a" style="left:791px;top:14px;width:213px;height:48px;border:2px solid #646464;border-radius:3px;background:#292929;box-shadow:0 2px 4px rgba(0,0,0,.3)"></div>
<span id="t1" class="t " style="left:822.00px;top:29.67px;font-size:20px;font-weight:700;color:#fff;-webkit-text-stroke:.2px #292929;">Request control</span>
<div class="a sep" style="left:1054px;top:14px;width:1px;height:48px"></div>
<div class="a sep" style="left:1451px;top:14px;width:2px;height:48px;background:#6a6a6a"></div>
<div class="a" style="left:1157px;top:64px;width:48px;height:3px;border-radius:2px;background:#a3a5fb;box-shadow:0 0 5px rgba(150,152,255,.55)"></div>
<div class="a" style="left:1706px;top:14px;width:179px;height:48px;border-radius:4px;background:#c4314b;box-shadow:0 3px 6px rgba(0,0,0,.45)"></div>
<div class="a" style="left:1836px;top:14px;width:1px;height:48px;background:#b02c45"></div>
<span id="t2" class="t " style="left:1765.00px;top:29.87px;font-size:20px;font-weight:700;color:#fff;letter-spacing:-0.600px;-webkit-text-stroke:.2px #c4314b;">Leave</span>
<svg class="a" style="left:0;top:0" width="1916" height="961" viewBox="0 0 1916 961" fill="none" stroke-linecap="round" stroke-linejoin="round">
<defs>
<g id="mic">
  <rect x="-5.75" y="0" width="11.5" height="21.4" rx="5.75" fill="#fff" stroke="none"/>
  <path d="M-9.45,13.8a9.45,9.45 0 0 0 18.9,0M0,23.3V29.4" stroke="#fff" stroke-width="1.8" fill="none"/>
  <path d="M-16.2,1.7L13.2,31" stroke="var(--bg,#1f1f1f)" stroke-width="2.2"/>
  <path d="M-14.7,0.2L14.7,29.6" stroke="#fff" stroke-width="1.9"/>
</g>
<g id="cam">
  <rect x="0.7" y="0.7" width="13.6" height="13.6" rx="2.6"/>
  <path d="M15.4,5.9L20.6,2.4V12.9L15.4,9.4"/>
  <path d="M3.9,-2.6Q10.8,-6.6 17.7,-2.6M3.9,17.7Q10.8,21.7 17.7,17.7" fill="none"/>
</g>
</defs>
<!-- people -->
<g stroke="#e2e2e2" stroke-width="1.7">
<circle cx="1104.5" cy="29.6" r="5.65"/>
<circle cx="1117.6" cy="31.4" r="3.65"/>
<path d="M1094.9,42.7a2.6,2.6 0 0 1 2.6,-2.6h13.1a2.6,2.6 0 0 1 2.6,2.6v.9c0,4.2 -4,6.3 -9.15,6.3s-9.15,-2.1 -9.15,-6.3z"/>
<path d="M1115.6,40.1h4.8a2.6,2.6 0 0 1 2.6,2.6c0,3.6 -2.6,5.6 -7,5.7"/>
</g>
<!-- chat bubble -->
<g stroke="#e2e2e2" stroke-width="1.8">
<path d="M1174.7,50.4A14,14 0 1 0 1167.9,43.5L1166.5,52.3Z"/>
<path d="M1175.2,35H1186.4M1175.2,40.8H1183"/>
</g>
<!-- raise hand + smiley -->
<g stroke="#e2e2e2" stroke-width="1.7">
<path d="M1239.6,38.4V28.6a1.3,1.3 0 0 1 2.6,0V26.7a1.5,1.5 0 0 1 3,0V25.85a1.65,1.65 0 0 1 3.3,0V27.1a1.65,1.65 0 0 1 3.3,0V33H1254.8a1.7,1.7 0 0 1 1.2,2.9L1248.900,42.300c-1.200,1.100 -2.300,1.400 -3.600,1.400c-3.200,0 -5.700,-2.500 -5.700,-5.300z"/>
<path d="M1242.2,28.6V32.800M1245.2,26.700V32.800M1248.500,27V32.800" stroke-width="1.100"/>
<path d="M1258.900,34A9,9 0 1 1 1249,46.200"/>
<path d="M1253.200,45.900Q1257.400,50.300 1261.600,45.900"/>
</g>
<circle cx="1254.400" cy="41.600" r="1.350" fill="#e2e2e2"/><circle cx="1260.300" cy="41.600" r="1.350" fill="#e2e2e2"/>
<!-- pop out -->
<g stroke="#e2e2e2" stroke-width="2">
<path d="M1313.900,35.300V29.400a2.500,2.500 0 0 1 2.500,-2.500H1333.600a2.500,2.500 0 0 1 2.500,2.500V46.700a2.500,2.500 0 0 1 -2.500,2.500H1328.400"/>
<rect x="1313.900" y="38.700" width="11" height="10.500" rx="2.500"/>
</g>
<!-- more dots -->
<g fill="#dcdcdc"><circle cx="1387" cy="38" r="3"/><circle cx="1396.900" cy="38" r="3"/><circle cx="1406.800" cy="38" r="3"/></g>
<!-- camera off -->
<g>
<rect x="1492" y="26.700" width="20.900" height="22.800" rx="4.200" fill="#fff"/>
<path d="M1514.300,34.600L1520.600,29.300c.8,-.7 1.700,-.2 1.700,.8V46c0,1 -.9,1.500 -1.700,.8L1514.300,41.500z" fill="#fff"/>
<path d="M1491.200,24.700L1520.300,53.800" stroke="#1f1f1f" stroke-width="2.300"/>
<path d="M1492.600,23.300L1521.700,52.400" stroke="#fff" stroke-width="2"/>
</g>
<!-- mic off -->
<use href="#mic" transform="translate(1579,23)"/>
<!-- share -->
<rect x="1636" y="26.700" width="30" height="22.800" rx="3.600" fill="#fff"/>
<path d="M1650.900,31.500V45M1645.400,36.700L1650.900,31.200L1656.400,36.700" stroke="#1f1f1f" stroke-width="1.900"/>
<!-- leave phone -->
<path d="M1722.8,39.600c0,-5.200 6.700,-8.100 15.100,-8.100s15.100,2.900 15.100,8.100c0,2.600 -.7,4.300 -2.700,4.300h-3.600c-1.700,0 -2.300,-1 -2.700,-2.700c-.4,-1.600 -.8,-2.700 -2,-3.100c-1.200,-.4 -2.500,-.6 -4.100,-.6s-2.900,.2 -4.100,.6c-1.200,.4 -1.600,1.500 -2,3.100c-.4,1.700 -1,2.700 -2.700,2.700h-3.600c-2,0 -2.700,-1.700 -2.700,-4.300z" fill="#fff"/>
<path d="M1853,33.600L1861,42.200L1869.100,33.600" stroke="#fff" stroke-width="1.600"/>
</svg>


</body></html>
